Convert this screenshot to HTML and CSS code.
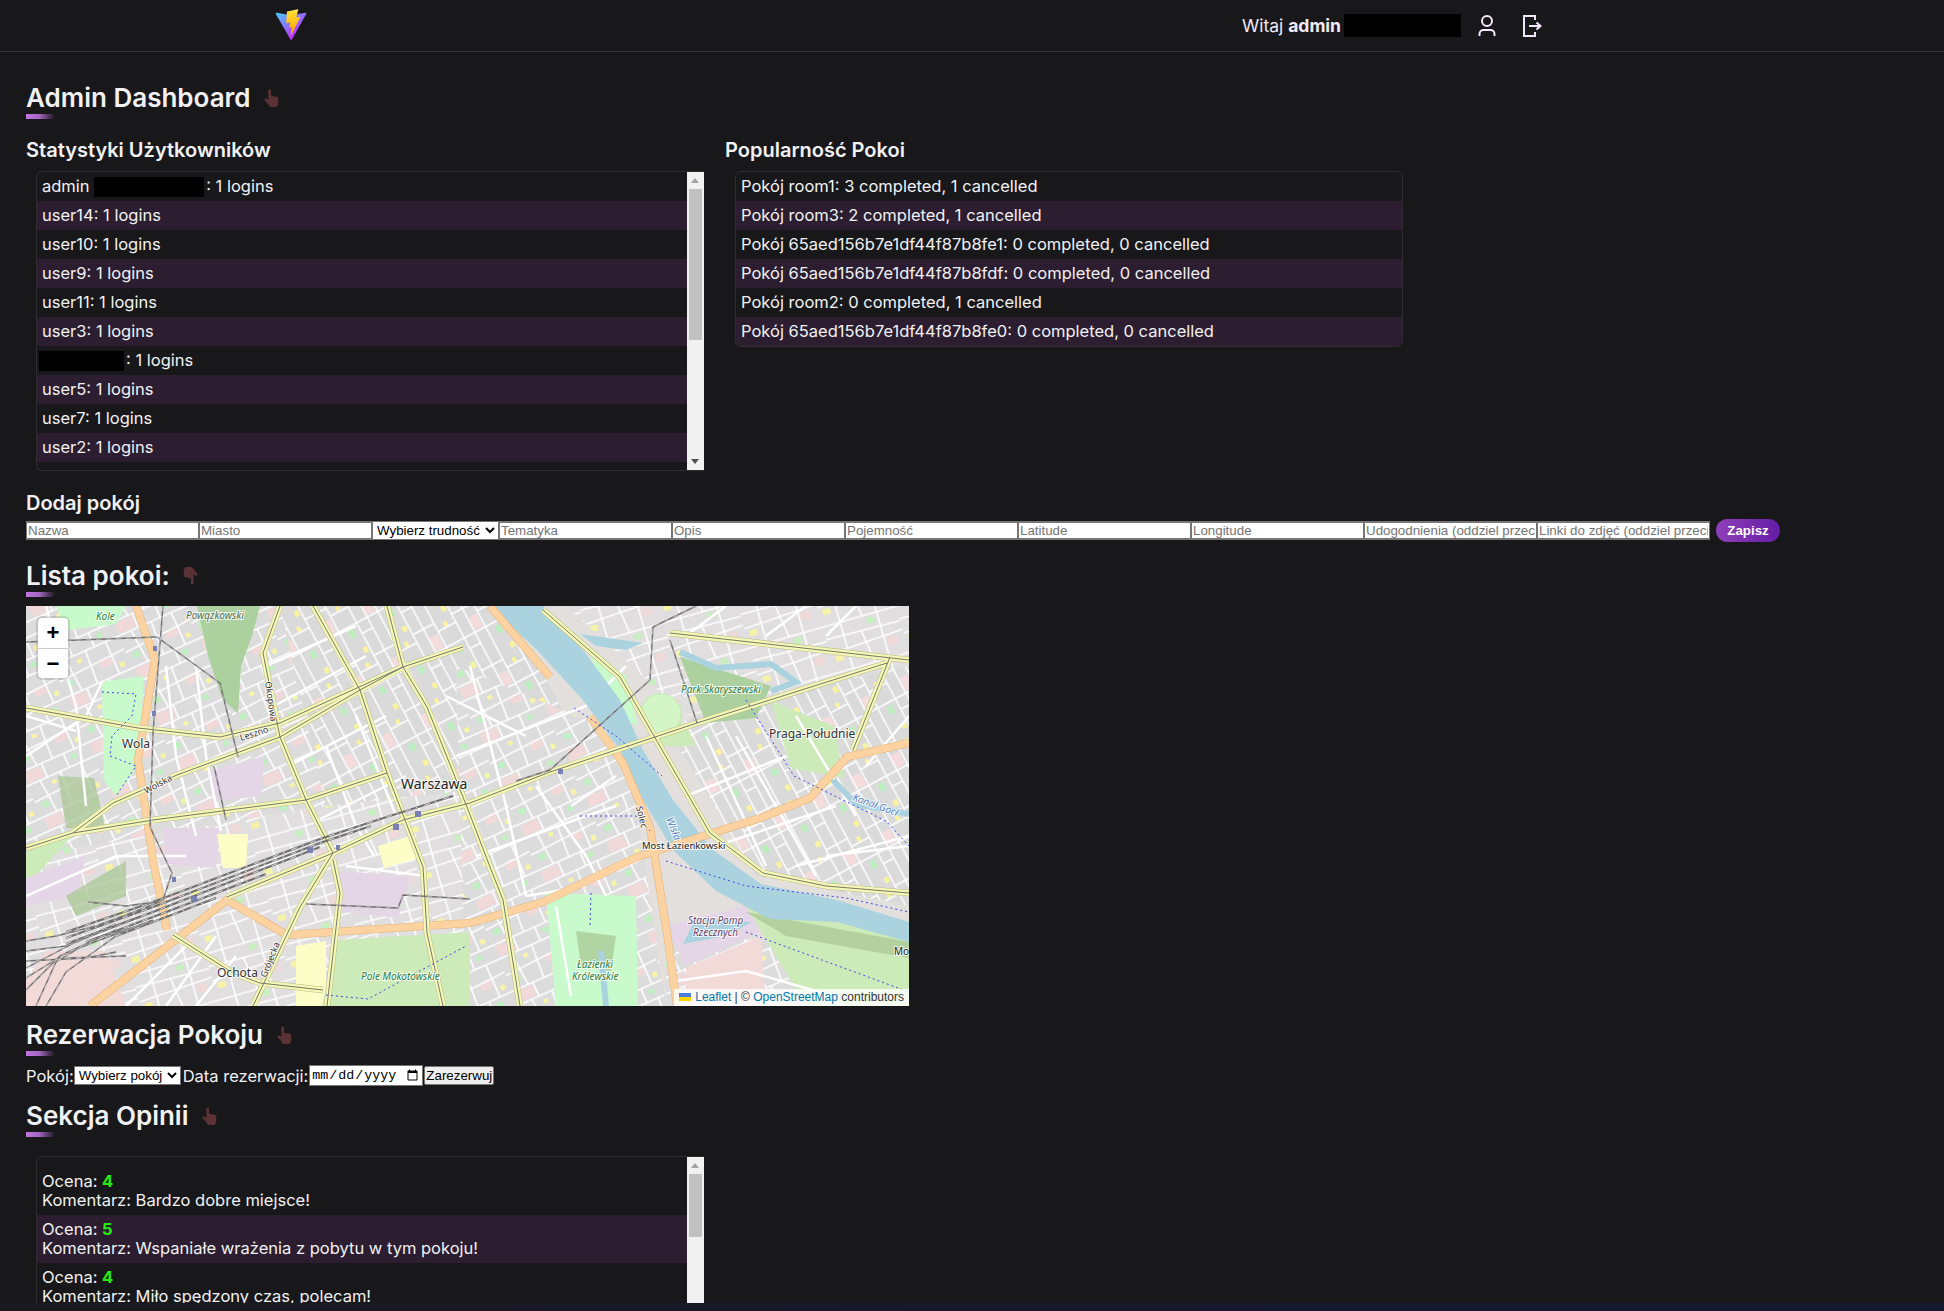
FILE: index.html
```html
<!DOCTYPE html>
<html lang="pl">
<head>
<meta charset="UTF-8">
<meta name="viewport" content="width=device-width, initial-scale=1.0">
<title>Admin Dashboard</title>
<link rel="stylesheet" href="styles.css">
</head>
<body>
<svg class="defs" width="0" height="0" aria-hidden="true">
  <defs>
    <linearGradient id="vite-a" x1="6" y1="33" x2="235" y2="344" gradientUnits="userSpaceOnUse">
      <stop stop-color="#41D1FF"/><stop offset="1" stop-color="#BD34FE"/>
    </linearGradient>
    <linearGradient id="vite-b" x1="194.651" y1="8.818" x2="236.076" y2="292.989" gradientUnits="userSpaceOnUse">
      <stop stop-color="#FFEA83"/><stop offset="0.0833" stop-color="#FFDD35"/><stop offset="1" stop-color="#FFA800"/>
    </linearGradient>
    <symbol id="hand" viewBox="0 0 16 20">
      <path d="M4.500 1.500C4.500.4 7.500.4 7.500 1.500V7.500L14 8.500C15.300 8.800 15.500 9.500 15.500 10.500V14.500C15.500 17 14.500 18 13.800 20H6C5.500 18 3.500 16.500 1.500 14C.3 12.500-.2 11.300.6 10.500 1.400 9.800 3 10.800 4.500 12.300Z"/>
    </symbol>
  </defs>
</svg>

<header class="topbar">
  <svg class="logo" viewBox="0 0 410 404" aria-label="Vite">
    <path fill="url(#vite-a)" d="M399.641 59.5246L215.643 388.545C211.844 395.338 202.084 395.378 198.228 388.618L10.5817 59.5563C6.38087 52.1896 12.6802 43.2665 21.0281 44.7586L205.223 77.6824C206.398 77.8924 207.601 77.8904 208.776 77.6763L389.119 44.8058C397.439 43.2894 403.768 52.1434 399.641 59.5246Z"/>
    <path fill="url(#vite-b)" d="M292.965 1.5744L156.801 28.2552C154.563 28.6937 152.906 30.5903 152.771 32.8664L144.395 174.33C144.198 177.662 147.258 180.248 150.51 179.498L188.42 170.749C191.967 169.931 195.172 173.055 194.443 176.622L183.18 231.775C182.422 235.487 185.907 238.661 189.532 237.56L212.947 230.446C216.577 229.344 220.065 232.527 219.297 236.242L201.398 322.875C200.278 328.294 207.486 331.249 210.492 326.603L212.5 323.5L323.454 102.072C325.312 98.3645 322.108 94.137 318.036 94.9228L279.014 102.454C275.347 103.161 272.227 99.746 273.262 96.1583L298.731 7.86689C299.767 4.27314 296.636 0.855181 292.965 1.5744Z"/>
  </svg>
  <div class="topbar-right">
    <span class="greeting">Witaj <b>admin</b></span>
    <span class="redact redact-top"></span>
    <svg class="top-icon icon-user" viewBox="0 0 18 24">
      <circle cx="9" cy="7" r="5"/>
      <path d="M1.500 22v-2c0-2.500 2-4 4-4h7c2 0 4 1.500 4 4v2"/>
    </svg>
    <svg class="top-icon icon-logout" viewBox="0 0 20 24">
      <path d="M13 6V2H2v20h11v-4"/>
      <path d="M7 12h11M14.500 8.500l4 3.500-4 3.500"/>
    </svg>
  </div>
</header>

<main class="page">
  <section class="block block-dash">
    <h1 class="title">Admin Dashboard <svg class="hand"><use href="#hand"/></svg></h1>
    <div class="stats">
      <div class="stats-col">
        <h2 class="subtitle">Statystyki Użytkowników</h2>
        <div class="list list-users">
          <div class="row">admin <span class="redact redact-name"></span>: 1 logins</div>
          <div class="row">user14: 1 logins</div>
          <div class="row">user10: 1 logins</div>
          <div class="row">user9: 1 logins</div>
          <div class="row">user11: 1 logins</div>
          <div class="row">user3: 1 logins</div>
          <div class="row row-hidden"><span class="redact redact-user"></span>: 1 logins</div>
          <div class="row">user5: 1 logins</div>
          <div class="row">user7: 1 logins</div>
          <div class="row">user2: 1 logins</div>
          <div class="scrollbar"><div class="thumb thumb-users"></div></div>
        </div>
      </div>
      <div class="stats-col stats-rooms">
        <h2 class="subtitle">Popularność Pokoi</h2>
        <div class="list list-rooms">
          <div class="row">Pokój room1: 3 completed, 1 cancelled</div>
          <div class="row">Pokój room3: 2 completed, 1 cancelled</div>
          <div class="row">Pokój 65aed156b7e1df44f87b8fe1: 0 completed, 0 cancelled</div>
          <div class="row">Pokój 65aed156b7e1df44f87b8fdf: 0 completed, 0 cancelled</div>
          <div class="row">Pokój room2: 0 completed, 1 cancelled</div>
          <div class="row">Pokój 65aed156b7e1df44f87b8fe0: 0 completed, 0 cancelled</div>
        </div>
      </div>
    </div>
  </section>

  <section class="block block-add">
    <h2 class="subtitle">Dodaj pokój</h2>
    <form class="add-form">
      <input type="text" placeholder="Nazwa">
      <input type="text" placeholder="Miasto">
      <select class="add-select"><option>Wybierz trudność</option></select>
      <input type="text" placeholder="Tematyka">
      <input type="text" placeholder="Opis">
      <input type="text" placeholder="Pojemność">
      <input type="text" placeholder="Latitude">
      <input type="text" placeholder="Longitude">
      <input type="text" placeholder="Udogodnienia (oddziel przecinkami)">
      <input type="text" placeholder="Linki do zdjęć (oddziel przecinkami)">
      <button type="button" class="save-btn">Zapisz</button>
    </form>
  </section>

  <section class="block block-map">
    <h1 class="title">Lista pokoi: <svg class="hand hand-down"><use href="#hand"/></svg></h1>
    <div class="map">
      <svg class="map-svg" viewBox="0 0 883 400" preserveAspectRatio="none">
        <defs>
          <pattern id="blocks-a" width="72" height="50" patternUnits="userSpaceOnUse" patternTransform="rotate(-24)">
            <rect width="72" height="50" fill="#dddcdc"/>
            <rect x="2" y="2" width="18" height="11" fill="#f2d9d9"/>
            <rect x="44" y="30" width="12" height="8" fill="#f2d9d9"/>
            <rect x="52" y="4" width="6" height="5" fill="#bff0c0"/>
            <rect x="24" y="20" width="5" height="4" fill="#f7f4a8"/>
            <rect x="62" y="40" width="5" height="5" fill="#f7f4a8"/>
            <rect x="6" y="36" width="7" height="6" fill="#bff0c0"/>
            <path d="M0 0H72M0 15H72M0 33L72 29M22 0V15M46 0V15M14 15L17 50M36 15L34 50M58 15V50M0 50H72" stroke="#fff" stroke-width="1.600" fill="none"/>
          </pattern>
          <pattern id="blocks-b" width="64" height="44" patternUnits="userSpaceOnUse" patternTransform="rotate(62)">
            <rect width="64" height="44" fill="#dadada"/>
            <rect x="26" y="2" width="14" height="9" fill="#f3dcdb"/>
            <rect x="3" y="26" width="6" height="5" fill="#f9f3a0"/>
            <rect x="46" y="30" width="8" height="6" fill="#bdeec0"/>
            <rect x="18" y="32" width="5" height="4" fill="#f9f3a0"/>
            <path d="M0 0H64M0 12H64M0 24H64M15 0V24M42 0V44M24 24V44M54 12V24M0 44H64" stroke="#fff" stroke-width="1.600" fill="none"/>
          </pattern>
          <pattern id="blocks-c" width="76" height="48" patternUnits="userSpaceOnUse" patternTransform="rotate(-16)">
            <rect width="76" height="48" fill="#e0dede"/>
            <rect x="4" y="31" width="8" height="6" fill="#f5f3a8"/>
            <rect x="44" y="3" width="8" height="6" fill="#c8efc0"/>
            <rect x="58" y="28" width="11" height="8" fill="#efd8d8"/>
            <path d="M0 0H76M0 13L76 15M0 28L76 24M18 0V48M36 13L41 48M56 0V48M0 48H76" stroke="#fff" stroke-width="1.600" fill="none"/>
          </pattern>
          <g id="roads-yellow">
            <path d="M0 102L112 122L194 131L254 117L377 61L437 41"/>
            <path d="M0 242L47 227L87 197L151 169L254 131L334 84L377 61"/>
            <path d="M254 0L237 47L254 131L280 194L307 247L274 301L227 400"/>
            <path d="M287 0L334 84L361 167L397 261L401 327L417 400"/>
            <path d="M361 0L377 61L401 101L441 201L464 261L477 294L494 400"/>
            <path d="M127 214L280 194L361 167"/>
            <path d="M47 227L127 214"/>
            <path d="M147 329L207 367L234 377L297 384"/>
            <path d="M201 291L307 247L377 214L444 197L524 166L671 117L861 57"/>
            <path d="M644 27L883 54"/>
            <path d="M517 4L594 71L684 227L737 267L800 280L883 287"/>
            <path d="M864 51L827 144"/>
            <path d="M307 254L314 287L301 400"/>
          </g>
          <g id="roads-orange">
            <path d="M110 0L129 54L112 154L127 254L141 324"/>
            <path d="M64 400L201 294L261 329L444 317L517 296L611 251L737 211L784 192L821 151L883 137"/>
            <path d="M464 0L524 71"/>
            <path d="M564 111L597 157L624 221L641 327L651 400"/>
          </g>
          <g id="streets">
            <path d="M0 150L60 110L76 76M20 0L50 100L60 200"/>
            <path d="M0 290L90 250L160 250M0 110L50 125"/>
            <path d="M140 60L150 150L170 230M170 60L180 150L195 225"/>
            <path d="M240 60L330 20M248 100L340 50M262 160L360 110M290 215L380 170"/>
            <path d="M300 140L330 220L348 250M330 110L370 210"/>
            <path d="M320 260L400 270M160 340L100 400M190 330L140 400M210 350L170 400"/>
            <path d="M430 150L560 100L600 60M420 90L500 130M450 250L560 210L590 200"/>
            <path d="M444 60L480 200L500 290M510 180L560 250L580 290"/>
            <path d="M500 290L560 280M545 200L590 170M530 300L545 390"/>
            <path d="M680 130L740 260M710 130L790 270M660 190L760 150M690 240L810 200"/>
            <path d="M770 110L830 210M800 250L883 240M770 260L883 230M840 160L883 110"/>
            <path d="M650 375L720 365L790 385L820 400M740 30L780 0M800 30L830 0M660 30L700 0"/>
          </g>
          <g id="rails">
            <path d="M137 0L127 127L124 221L146 267L137 294L110 306"/>
            <path d="M131 31L194 77L212 151"/>
            <path d="M188 160L200 214"/>
            <path d="M670 0L627 21L624 74L524 164L490 175"/>
            <path d="M644 34L671 117"/>
            <path d="M0 36L131 31"/>
            <path d="M280 298L372 302L377 289L444 293"/>
            <path d="M0 372L42 346L127 314"/>
            <path d="M10 400L30 356L70 332L127 316"/>
            <path d="M20 400L40 366L90 330"/>
            <path d="M0 345L40 340L90 318"/>
            <path d="M0 355L60 352L90 346"/>
            <path d="M0 362L50 336L110 312"/>
            <path d="M0 384L34 350L90 324"/>
            <path d="M0 335L30 330L70 320L124 300"/>
            <path d="M40 352L100 350"/>
            <path d="M62 296L100 300L130 296"/>
          </g>
          <g id="rail-bundle">
            <path d="M40 326L127 296L294 233L345 216L427 190"/>
            <path d="M40 332L127 301L294 237L345 220"/>
            <path d="M40 338L127 306L294 241"/>
            <path d="M60 336L127 311L240 268"/>
            <path d="M90 330L127 316L190 292"/>
          </g>
        </defs>

        <rect class="land" width="883" height="400"/>
        <path fill="url(#blocks-a)" d="M0 0H254L300 200L130 260L0 330Z"/>
        <path fill="url(#blocks-b)" d="M254 0H480L540 110L444 200L300 200Z"/>
        <path fill="url(#blocks-c)" d="M0 250L300 200L480 180L560 280L560 400H0Z"/>
        <path fill="url(#blocks-a)" d="M430 60L600 130L640 400H440Z"/>
        <path fill="url(#blocks-b)" d="M640 120L883 50V300L730 270Z"/>
        <path fill="url(#blocks-c)" d="M540 0H883V60L660 110Z"/>
        <path fill="url(#blocks-a)" d="M640 330L883 340V400H640Z"/>

        <path class="park-dark" d="M171 0H234L226 30L215 60L212 108L196 92L182 50Z"/>
        <path class="park" d="M76 76L118 70L112 160L90 190L78 175Z"/>
        <path class="olive" d="M32 170L68 172L80 225L40 222Z"/>
        <path class="park-soft" d="M0 246L50 226L0 280Z"/>
        <path class="purple" d="M137 222L194 222L190 262L140 258Z"/>
        <path class="purple" d="M185 165L238 150L235 190L190 195Z"/>
        <path class="purple" d="M310 265L385 270L372 312L310 305Z"/>
        <path class="pale" d="M191 228L222 228L220 262L197 262Z"/>
        <path class="pale" d="M352 240L390 228L392 252L358 262Z"/>
        <path class="pale" d="M270 340L300 335L300 400L270 400Z"/>
        <path class="purple" d="M0 272L60 250L50 290L0 300Z"/>
        <path class="olive" d="M40 290L100 255L100 290L50 310Z"/>
        <path class="pink" d="M0 375L20 345L80 345L100 400H0Z"/>
        <path class="park" d="M30 0L100 0L90 18L40 24Z"/>
        <path class="park-soft" d="M310 334L444 326V400H296Z"/>
        <path class="park" d="M520 287L610 290L612 400H530Z"/>
        <path class="olive" d="M550 325L590 330L585 365L555 360Z"/>
        <path class="purple" d="M640 320L720 300L735 325L660 360Z"/>
        <path class="pink" d="M660 362L735 330L740 400H660Z"/>
        <path class="park-dark" d="M654 51L745 80L730 112L680 117Z"/>
        <path class="park-soft" d="M745 95L808 120L818 172L765 162Z"/>
        <path class="park-soft" d="M720 300L883 330V400H780Z"/>
        <path class="olive" d="M720 306L883 336V352L760 330Z"/>
        <path class="park-soft" d="M620 90L660 120L670 140L630 140Z"/>
        <circle class="stadium" cx="635" cy="108" r="20"/>
        <path class="park" d="M560 40L600 70L612 120L590 110Z"/>
        <path class="olive" d="M600 130L625 170L665 230L650 236L620 190Z"/>

        <use href="#streets" class="streets"/>

        <path class="water" d="M464 0H517L557 44L594 94L617 144L647 194L687 244L735 278L811 294L883 316V336L811 316L744 313L690 285L647 244L617 194L594 144L557 94L511 44Z"/>
        <path class="water" d="M657 338L670 312L726 316L700 330Z"/>
        <path class="water" d="M554 28L617 37L600 44L570 40Z"/>
        <path class="water-thin" d="M654 46L690 62L745 58L770 76L745 85"/>
        <path class="water-thin" d="M807 174L830 198L883 208"/>
        <path class="water-thin" d="M575 345L580 400"/>

        <use href="#roads-orange" class="road-case case-orange"/>
        <use href="#roads-orange" class="road-fill fill-orange"/>
        <use href="#roads-yellow" class="road-case case-yellow"/>
        <use href="#roads-yellow" class="road-fill fill-yellow"/>
        <use href="#roads-yellow" class="road-fill center-yellow"/>
        <use href="#rail-bundle" class="bundle"/>
        <use href="#rail-bundle" class="bundle-dash"/>
        <use href="#rails" class="rail"/>
        <use href="#rails" class="rail-dash"/>
        <g class="stations">
          <rect x="127" y="40" width="4" height="5"/>
          <rect x="126" y="105" width="4" height="5"/>
          <rect x="146" y="271" width="4" height="5"/>
          <rect x="165" y="290" width="6" height="6"/>
          <rect x="281" y="241" width="6" height="6"/>
          <rect x="310" y="239" width="4" height="5"/>
          <rect x="367" y="218" width="6" height="6"/>
          <rect x="389" y="205" width="6" height="6"/>
          <rect x="532" y="163" width="5" height="5"/>
        </g>

        <g class="paths">
          <path d="M76 86L110 88L106 110L86 130L84 150L110 160L90 190"/>
          <path d="M720 94L768 170L860 215L883 240"/>
          <path d="M720 326L883 386"/>
          <path d="M300 389L342 393L440 340"/>
          <path d="M548 102L590 130L636 170"/>
          <path d="M554 210L610 210L624 225"/>
          <path d="M565 287L564 320"/>
          <path d="M640 255L720 280L820 292L883 306"/>
        </g>

        <text class="label label-city" x="96" y="142">Wola</text>
        <text class="label label-big" x="375" y="183">Warszawa</text>
        <text class="label label-city" x="191" y="371">Ochota</text>
        <text class="label label-city" x="743" y="132">Praga-Południe</text>
        <text class="label label-small" x="616" y="243">Most Łazienkowski</text>
        <text class="label label-mo" x="868" y="349">Mo</text>
        <text class="label label-park" x="70" y="14">Kole</text>
        <text class="label label-park label-dark" x="160" y="13">Powązkowski</text>
        <text class="label label-park" x="655" y="87">Park Skaryszewski</text>
        <text class="label label-park" x="335" y="374">Pole Mokotowskie</text>
        <text class="label label-park" x="551" y="362">Łazienki</text>
        <text class="label label-park" x="546" y="374">Królewskie</text>
        <text class="label label-plum" x="662" y="318">Stacja Pomp</text>
        <text class="label label-plum" x="667" y="330">Rzecznych</text>
        <text class="label label-road" x="120" y="188" transform="rotate(-28 120 188)">Wolska</text>
        <text class="label label-road" x="215" y="135" transform="rotate(-18 215 135)">Leszno</text>
        <text class="label label-road" x="239" y="76" transform="rotate(82 239 76)">Okopowa</text>
        <text class="label label-road" x="240" y="372" transform="rotate(-68 240 372)">Grójecka</text>
        <text class="label label-road" x="610" y="201" transform="rotate(76 610 201)">Solec</text>
        <text class="label label-river" x="640" y="213" transform="rotate(68 640 213)">Wisła</text>
        <text class="label label-river" x="826" y="194" transform="rotate(20 826 194)">Kanał Gocł</text>
      </svg>

      <div class="zoom-ctl">
        <span class="zoom-btn">+</span>
        <span class="zoom-btn">−</span>
      </div>
      <div class="attrib">
        <svg class="flag" viewBox="0 0 12 8"><rect width="12" height="4" fill="#4C7BE1"/><rect y="4" width="12" height="4" fill="#FFD500"/></svg>
        <a>Leaflet</a> | © <a>OpenStreetMap</a> contributors
      </div>
    </div>
  </section>

  <section class="block block-reserve">
    <h1 class="title">Rezerwacja Pokoju <svg class="hand"><use href="#hand"/></svg></h1>
    <form class="reserve-form">
      <label>Pokój:</label>
      <select class="reserve-select"><option>Wybierz pokój</option></select>
      <label>Data rezerwacji:</label>
      <input class="reserve-date" type="date">
      <button type="button" class="reserve-btn">Zarezerwuj</button>
    </form>
  </section>

  <section class="block block-reviews">
    <h1 class="title">Sekcja Opinii <svg class="hand"><use href="#hand"/></svg></h1>
    <div class="list list-reviews">
      <div class="row row-review">Ocena: <b class="score">4</b><br>Komentarz: Bardzo dobre miejsce!</div>
      <div class="row row-review">Ocena: <b class="score">5</b><br>Komentarz: Wspaniałe wrażenia z pobytu w tym pokoju!</div>
      <div class="row row-review">Ocena: <b class="score">4</b><br>Komentarz: Miło spędzony czas, polecam!</div>
      <div class="scrollbar"><div class="thumb thumb-reviews"></div></div>
    </div>
  </section>
</main>
<div class="bottom-strip"></div>
</body>
</html>
```

FILE: styles.css
```css
* {
  box-sizing: border-box;
}
html, body {
  height: 100%;
}
body {
  margin: 0;
  overflow: hidden;
  background: #18181b;
  color: #f1f1f3;
  font-family: Inter, "Noto Sans", sans-serif;
  font-size: 16.5px;
  position: relative;
}
.defs {
  position: absolute;
}

/* top bar */
.topbar {
  height: 52px;
  border-bottom: 1px solid #333336;
  display: flex;
  align-items: center;
  justify-content: space-between;
  padding: 0 402px 0 275px;
}
.logo {
  width: 32px;
  height: 32px;
  margin-top: -1px;
}
.topbar-right {
  display: flex;
  align-items: center;
}
.greeting {
  font-size: 17.5px;
  color: #f0eaf6;
  white-space: nowrap;
}
.greeting b {
  font-weight: 700;
}
.redact {
  display: inline-block;
  background: #000;
}
.redact-top {
  width: 117px;
  height: 23px;
  margin-left: 3px;
}
.top-icon {
  fill: none;
  stroke: #f3e8fb;
  stroke-width: 2;
  width: 18px;
  height: 24px;
}
.icon-user {
  margin-left: 17px;
}
.icon-logout {
  width: 20px;
  margin-left: 26px;
}

/* sections */
.page {
  padding: 0 26px;
}
.block-dash {
  padding-top: 29px;
}
.block-add {
  padding-top: 19px;
}
.block-map {
  padding-top: 17px;
}
.block-reserve {
  padding-top: 12px;
}
.block-reviews {
  padding-top: 13px;
}
.title {
  margin: 0;
  font-size: 26px;
  line-height: 34px;
  font-weight: 600;
  position: relative;
  padding-bottom: 4px;
  white-space: nowrap;
}
.title::after {
  content: "";
  position: absolute;
  left: 0;
  bottom: 0;
  width: 29px;
  height: 5px;
  background: linear-gradient(90deg, #c276de 0%, #a566c4 45%, #18181b 100%);
}
.hand {
  width: 15px;
  height: 18px;
  margin-left: 7px;
  fill: #5a3135;
  vertical-align: 0;
}
.hand-down {
  transform: rotate(180deg);
}
.subtitle {
  margin: 0;
  font-size: 20px;
  line-height: 26px;
  font-weight: 600;
}

/* stats */
.stats {
  display: flex;
  padding-top: 18px;
}
.stats-col {
  width: 699px;
}
.list {
  position: relative;
  margin: 8px 0 0 10px;
  border: 1px solid #2e2e32;
  border-radius: 6px;
  overflow: hidden;
  width: 668px;
}
.list-users,
.list-reviews {
  border-radius: 6px 0 0 6px;
  border-right: none;
}
.list-users {
  height: 300px;
}
.row {
  height: 29px;
  line-height: 29px;
  padding-left: 5px;
  white-space: nowrap;
}
.row:nth-child(even) {
  background: #2c1e30;
}
.row-hidden {
  padding-left: 2px;
}
.redact-name {
  width: 110px;
  height: 20px;
  vertical-align: -5px;
  margin-right: 2px;
}
.redact-user {
  width: 85px;
  height: 20px;
  vertical-align: -5px;
  margin-right: 2px;
}

/* painted scrollbar, the lists are shown at their top */
.scrollbar {
  position: absolute;
  top: 0;
  right: 0;
  bottom: 0;
  width: 17px;
  background: #f1f1f1;
}
.scrollbar::before,
.scrollbar::after {
  content: "";
  position: absolute;
  left: 4px;
  border-left: 4px solid transparent;
  border-right: 4px solid transparent;
}
.scrollbar::before {
  top: 6px;
  border-bottom: 5px solid #a3a3a3;
}
.scrollbar::after {
  bottom: 6px;
  border-top: 5px solid #505050;
}
.thumb {
  margin: 17px 2px 0;
  background: #c1c1c1;
}
.thumb-users {
  height: 151px;
}
.thumb-reviews {
  height: 63px;
}

/* add room form */
.add-form {
  display: flex;
  align-items: center;
  margin-top: 3px;
}
.add-form input,
.add-select,
.reserve-select,
.reserve-date,
.reserve-btn,
.save-btn {
  font-family: "Liberation Sans", Arial, sans-serif;
  font-size: 13.33px;
}
.add-form input {
  width: 173px;
  height: 19px;
  padding: 0 1px;
  background: #fff;
  border-style: solid;
  border-color: #767676;
  border-width: 2px 1px;
  border-radius: 0;
  color: #111;
}
.add-form input::placeholder {
  color: #757575;
}
.add-select {
  width: 127px;
  height: 19px;
  padding: 0;
  background: #fff;
  color: #000;
  border: 1px solid #767676;
  border-radius: 0;
}
.save-btn {
  margin-left: 6px;
  width: 64px;
  height: 23px;
  border: none;
  border-radius: 12px;
  background: linear-gradient(90deg, #8f3fb8, #651da6);
  color: #fff;
  font-weight: 700;
}

/* map */
.map {
  position: relative;
  width: 883px;
  height: 400px;
  margin-top: 9px;
  overflow: hidden;
  background: #ddd;
}
.map-svg {
  display: block;
  width: 883px;
  height: 400px;
}
.land { fill: #e2dfdc; }
.park { fill: #c8facc; }
.park-soft { fill: #cdebb8; }
.park-dark { fill: #add19e; }
.olive { fill: #a9c796; opacity: 0.75; }
.pink { fill: #f2dad9; }
.purple { fill: #e4d6e6; }
.pale { fill: #fdfdc8; }
.stadium { fill: #d4f6c6; stroke: #bcecb0; }
.water { fill: #aad3df; }
.water-thin {
  fill: none;
  stroke: #aad3df;
  stroke-width: 6;
}
.streets {
  fill: none;
  stroke: #fff;
  stroke-width: 2.500;
}
.road-case, .road-fill, .rail, .rail-dash, .bundle, .bundle-dash, .paths {
  fill: none;
  stroke-linejoin: round;
}
.case-yellow { stroke: #b9ba8e; stroke-width: 6.500; }
.fill-yellow { stroke: #f5f8b4; stroke-width: 5.500; }
.center-yellow { stroke: #77786a; stroke-width: 1; }
.case-orange { stroke: #e0b47c; stroke-width: 8; }
.fill-orange { stroke: #fcd2a0; stroke-width: 7; }
.rail { stroke: #6f6f6f; stroke-width: 1.400; }
.rail-dash { stroke: #eee; stroke-width: 0.500; stroke-dasharray: 5 5; }
.bundle { stroke: #6f6f6f; stroke-width: 2; }
.bundle-dash { stroke: #ececec; stroke-width: 0.800; stroke-dasharray: 6 5 2 7; }
.stations { fill: #7880b4; }
.paths {
  stroke: #3b46f0;
  stroke-width: 1;
  stroke-dasharray: 2 3;
}
.label {
  font-family: "Noto Sans", sans-serif;
  paint-order: stroke;
  stroke: rgba(255, 255, 255, 0.8);
  stroke-width: 2px;
}
.label-big { font-size: 14px; fill: #222; }
.label-city { font-size: 12px; fill: #333; }
.label-small { font-size: 9.500px; fill: #222; }
.label-mo { font-size: 10px; fill: #222; }
.label-park { font-size: 10px; font-style: italic; fill: #2a7d3a; }
.label-dark { fill: #4f6d50; }
.label-plum { font-size: 10px; font-style: italic; fill: #6a3f6a; }
.label-road { font-size: 9px; fill: #333; }
.label-river { font-size: 10px; font-style: italic; fill: #5b83c0; }

.zoom-ctl {
  position: absolute;
  left: 12px;
  top: 12px;
  width: 30px;
  background: #fff;
  border-radius: 4px;
  box-shadow: 0 0 0 2px rgba(0, 0, 0, 0.12);
}
.zoom-btn {
  display: block;
  height: 30px;
  text-align: center;
  color: #000;
  font: 700 22px/30px "Liberation Sans", Arial, sans-serif;
}
.zoom-btn + .zoom-btn {
  border-top: 1px solid #ccc;
}
.attrib {
  position: absolute;
  right: 0;
  bottom: 0;
  height: 17px;
  padding: 0 5px;
  background: rgba(255, 255, 255, 0.8);
  color: #333;
  font: 12px/17px "Liberation Sans", Arial, sans-serif;
  white-space: nowrap;
}
.attrib a {
  color: #0078a8;
}
.flag {
  width: 12px;
  height: 8px;
  margin-right: 1px;
}

/* reservation */
.reserve-form {
  display: flex;
  align-items: center;
  margin-top: 9px;
  white-space: nowrap;
}
.reserve-select {
  width: 107px;
  height: 19px;
  margin: 0 2px 0 0;
  padding: 0;
  background: #fff;
  color: #000;
  border: 1px solid #767676;
  border-radius: 0;
}
.reserve-date {
  width: 114px;
  height: 21px;
  margin-left: 1px;
  padding: 0 1px;
  background: #fff;
  color: #000;
  border: 1px solid #767676;
  border-radius: 0;
  font-family: "Liberation Mono", monospace;
}
.reserve-btn {
  width: 70px;
  height: 19px;
  margin-left: 1px;
  padding: 0;
  background: #efefef;
  color: #000;
  border: 1px solid #767676;
  border-radius: 2px;
}

/* reviews */
.list-reviews {
  height: 300px;
  margin-top: 19px;
  padding-top: 10px;
}
.row-review {
  height: 48px;
  line-height: 19px;
  padding-top: 5px;
}
.score {
  color: #22ee11;
  font-weight: 700;
}
.bottom-strip {
  position: absolute;
  left: 0;
  right: 0;
  bottom: 0;
  height: 8px;
  background: linear-gradient(90deg, #1a1a1e 0%, #16182a 45%, #141a30 100%);
}
```
